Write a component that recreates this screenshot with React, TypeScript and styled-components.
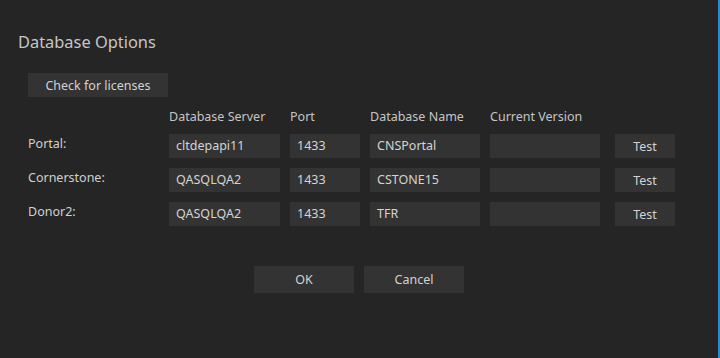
import { Fragment } from "react";
import styled, { createGlobalStyle } from "styled-components";

const GlobalStyle = createGlobalStyle`
  html, body {
    margin: 0;
    padding: 0;
    background: #252525;
  }
  body {
    font-family: "Segoe UI", "Noto Sans", "Open Sans", sans-serif;
    color: #cfcfcf;
  }
`;

const Dialog = styled.div`
  box-sizing: border-box;
  width: 720px;
  height: 358px;
  background: #252525;
  border-right: 2px solid #1b8fe0;
  padding: 30px 0 0 18px;
  display: flex;
  flex-direction: column;
  align-items: flex-start;
`;

const Title = styled.h1`
  margin: 0;
  font-size: 16.4px;
  font-weight: 400;
  line-height: 24px;
  color: #c6c6c6;
`;

const Button = styled.button<{ $w: number; $h?: number }>`
  box-sizing: border-box;
  width: ${(p) => p.$w}px;
  height: ${(p) => p.$h ?? 24}px;
  border: none;
  padding: 2px 0 0;
  background: #333333;
  color: #d2d2d2;
  font-family: inherit;
  font-size: 12.5px;
  line-height: 1;
`;

const LicenseButton = styled(Button)`
  margin: 19px 0 0 10px;
`;

const Grid = styled.div`
  margin: 10px 0 0 10px;
  display: grid;
  grid-template-columns: 131px 111px 70px 110px 110px 65px;
  grid-template-rows: 17px repeat(3, 24px);
  column-gap: 10px;
  row-gap: 10px;
`;

const Header = styled.div`
  padding-top: 1px;
  font-size: 12.5px;
  line-height: 17px;
  color: #c4c4c4;
  white-space: nowrap;
`;

const RowLabel = styled.div`
  font-size: 12.5px;
  line-height: 18px;
  align-self: center;
  margin-bottom: 5px;
  color: #d0d0d0;
`;

const Field = styled.div`
  box-sizing: border-box;
  height: 24px;
  background: #333333;
  padding: 0 7px;
  font-size: 12.5px;
  line-height: 24px;
  color: #d4d4d4;
  white-space: nowrap;
  overflow: hidden;
`;

const TestButton = styled(Button)`
  margin-left: 5px;
`;

const Footer = styled.div`
  align-self: stretch;
  margin: 40px 18px 0 0;
  display: flex;
  justify-content: center;
  gap: 10px;
`;

const rows = [
  { label: "Portal:", server: "cltdepapi11", port: "1433", name: "CNSPortal" },
  { label: "Cornerstone:", server: "QASQLQA2", port: "1433", name: "CSTONE15" },
  { label: "Donor2:", server: "QASQLQA2", port: "1433", name: "TFR" },
];

export default function App() {
  return (
    <>
      <GlobalStyle />
      <Dialog>
        <Title>Database Options</Title>
        <LicenseButton $w={140}>Check for licenses</LicenseButton>
        <Grid>
          <span />
          <Header>Database Server</Header>
          <Header>Port</Header>
          <Header>Database Name</Header>
          <Header>Current Version</Header>
          <span />
          {rows.map((r) => (
            <Fragment key={r.label}>
              <RowLabel>{r.label}</RowLabel>
              <Field>{r.server}</Field>
              <Field>{r.port}</Field>
              <Field>{r.name}</Field>
              <Field />
              <TestButton $w={60}>Test</TestButton>
            </Fragment>
          ))}
        </Grid>
        <Footer>
          <Button $w={100} $h={27}>OK</Button>
          <Button $w={100} $h={27}>Cancel</Button>
        </Footer>
      </Dialog>
    </>
  );
}
